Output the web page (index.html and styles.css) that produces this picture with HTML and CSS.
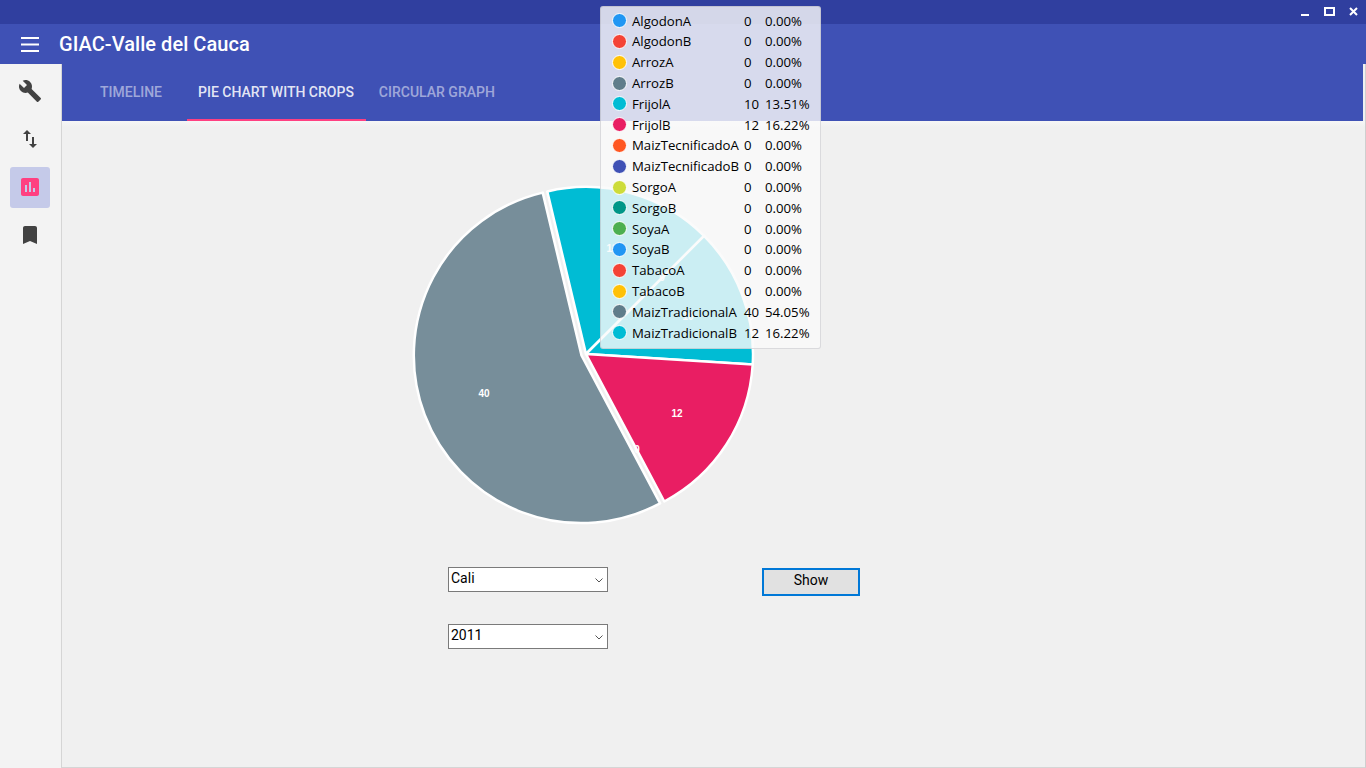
FILE: index.html
```html
<!DOCTYPE html>
<html lang="en">
<head>
  <meta charset="UTF-8" />
  <title>GIAC-Valle del Cauca</title>
  <link rel="stylesheet" href="styles.css">
</head>
<body>
  <!-- Window title bar -->
  <div class="titlebar">
    <svg class="win-btn" viewBox="0 0 24 24"><rect x="8" y="14" width="8" height="2" /></svg>
    <svg class="win-btn" viewBox="0 0 24 24"><rect class="win-line" x="8" y="8" width="9" height="7" /></svg>
    <svg class="win-btn" viewBox="0 0 24 24"><path class="win-line" d="M9 8L16 15M16 8L9 15" /></svg>
  </div>

  <!-- App bar -->
  <header class="appbar">
    <svg class="menu-icon" viewBox="0 0 18 15">
      <rect width="18" height="2" />
      <rect y="6.5" width="18" height="2" />
      <rect y="13" width="18" height="2" />
    </svg>
    <h1 class="app-title">GIAC-Valle del Cauca</h1>
  </header>

  <div class="workspace">
    <!-- Left tools -->
    <nav class="sidebar">
      <div class="tool">
        <svg viewBox="0 0 24 24"><path d="M22.7 19l-9.1-9.1c.9-2.3.4-5-1.5-6.9-2-2-5-2.4-7.4-1.3L9 6 6 9 1.6 4.7C.4 7.1.9 10.1 2.9 12.1c1.9 1.9 4.6 2.4 6.9 1.5l9.1 9.1c.4.4 1 .4 1.4 0l2.3-2.3c.5-.4.5-1.1.1-1.4z" /></svg>
      </div>
      <div class="tool">
        <svg viewBox="0 0 24 24"><path d="M9 3L5 6.99h3V14h2V6.99h3L9 3zm7 14.01V10h-2v7.01h-3L15 21l4-3.99h-3z" /></svg>
      </div>
      <div class="tool tool-active">
        <svg viewBox="0 0 24 24"><path d="M19 3H5c-1.1 0-2 .9-2 2v14c0 1.1.9 2 2 2h14c1.1 0 2-.9 2-2V5c0-1.1-.9-2-2-2zM9 17H7v-7h2v7zm4 0h-2V7h2v10zm4 0h-2v-4h2v4z" /></svg>
      </div>
      <div class="tool">
        <svg viewBox="0 0 24 24"><path d="M17 3H7c-1.1 0-1.99.9-1.99 2L5 21l7-3 7 3V5c0-1.1-.9-2-2-2z" /></svg>
      </div>
    </nav>

    <main class="main">
      <div class="tabs">
        <div class="tab">TIMELINE</div>
        <div class="tab tab-active">PIE CHART WITH CROPS</div>
        <div class="tab">CIRCULAR GRAPH</div>
      </div>

      <div class="content">
        <svg class="pie" viewBox="411 184 344 344">
          <g class="slices">
            <path fill="#00bcd4" d="M586 354L547.300 191.500A167 167 0 0 1 704.100 235.900Z" />
            <path fill="#00bcd4" d="M586 354L704.100 235.900A167 167 0 0 1 752.700 364.500Z" />
            <path fill="#e91e63" d="M586 354L752.700 364.500A167 167 0 0 1 664.300 501.500Z" />
            <path fill="#778e9a" d="M581.500 355.500L660.100 503.400A167.500 167.500 0 1 1 542.700 192.600Z" />
          </g>
          <g class="pie-labels">
            <text x="484" y="396.500">40</text>
            <text x="677" y="416.500">12</text>
            <text x="612" y="252">12</text>
            <text x="688" y="320">10</text>
            <text x="662" y="281">0</text>
            <text x="637" y="453">0</text>
          </g>
        </svg>

        <div class="filters">
          <div class="combos">
            <div class="combo">Cali<svg viewBox="0 0 8 5"><path d="M.5 .5L4 4L7.500 .5" /></svg></div>
            <div class="combo">2011<svg viewBox="0 0 8 5"><path d="M.5 .5L4 4L7.500 .5" /></svg></div>
          </div>
          <button class="show-btn">Show</button>
        </div>
      </div>
    </main>
  </div>

  <!-- Chart tooltip, lies over everything -->
  <div class="legend">
    <div class="legend-row"><span class="dot" style="background:#2196f3"></span><span>AlgodonA</span><span>0</span><span>0.00%</span></div>
    <div class="legend-row"><span class="dot" style="background:#f44336"></span><span>AlgodonB</span><span>0</span><span>0.00%</span></div>
    <div class="legend-row"><span class="dot" style="background:#ffc107"></span><span>ArrozA</span><span>0</span><span>0.00%</span></div>
    <div class="legend-row"><span class="dot" style="background:#607d8b"></span><span>ArrozB</span><span>0</span><span>0.00%</span></div>
    <div class="legend-row"><span class="dot" style="background:#00bcd4"></span><span>FrijolA</span><span>10</span><span>13.51%</span></div>
    <div class="legend-row"><span class="dot" style="background:#e91e63"></span><span>FrijolB</span><span>12</span><span>16.22%</span></div>
    <div class="legend-row"><span class="dot" style="background:#ff5722"></span><span>MaizTecnificadoA</span><span>0</span><span>0.00%</span></div>
    <div class="legend-row"><span class="dot" style="background:#3f51b5"></span><span>MaizTecnificadoB</span><span>0</span><span>0.00%</span></div>
    <div class="legend-row"><span class="dot" style="background:#cddc39"></span><span>SorgoA</span><span>0</span><span>0.00%</span></div>
    <div class="legend-row"><span class="dot" style="background:#009688"></span><span>SorgoB</span><span>0</span><span>0.00%</span></div>
    <div class="legend-row"><span class="dot" style="background:#4caf50"></span><span>SoyaA</span><span>0</span><span>0.00%</span></div>
    <div class="legend-row"><span class="dot" style="background:#2196f3"></span><span>SoyaB</span><span>0</span><span>0.00%</span></div>
    <div class="legend-row"><span class="dot" style="background:#f44336"></span><span>TabacoA</span><span>0</span><span>0.00%</span></div>
    <div class="legend-row"><span class="dot" style="background:#ffc107"></span><span>TabacoB</span><span>0</span><span>0.00%</span></div>
    <div class="legend-row"><span class="dot" style="background:#607d8b"></span><span>MaizTradicionalA</span><span>40</span><span>54.05%</span></div>
    <div class="legend-row"><span class="dot" style="background:#00bcd4"></span><span>MaizTradicionalB</span><span>12</span><span>16.22%</span></div>
  </div>
</body>
</html>
```

FILE: styles.css
```css
* {
  box-sizing: border-box;
}

body {
  margin: 0;
  width: 1366px;
  height: 768px;
  overflow: hidden;
  background: #f0f0f0;
  color: #000;
  font-family: Roboto, sans-serif;
  display: flex;
  flex-direction: column;
}

/* Title bar */
.titlebar {
  height: 24px;
  flex: none;
  background: #303f9f;
  display: flex;
  justify-content: flex-end;
  padding-right: 1px;
}

.win-btn {
  width: 24px;
  height: 24px;
  fill: #fff;
}

.win-line {
  fill: none;
  stroke: #fff;
  stroke-width: 2;
}

/* App bar */
.appbar {
  height: 40px;
  flex: none;
  background: #3f51b5;
  color: #fff;
  display: flex;
  align-items: center;
  gap: 20px;
  padding-left: 21px;
}

.menu-icon {
  width: 18px;
  height: 15px;
  fill: #fff;
}

.app-title {
  margin: 0;
  font-size: 20px;
  font-weight: 500;
  letter-spacing: 0.05px;
}

.workspace {
  flex: 1;
  display: flex;
  min-height: 0;
}

/* Sidebar */
.sidebar {
  width: 62px;
  flex: none;
  background: #f3f3f3;
  border-right: 1px solid #d5d5d5;
  padding: 7px 11px 0 10px;
  display: flex;
  flex-direction: column;
  gap: 7px;
}

.tool {
  height: 41px;
  border-radius: 3px;
  padding-top: 8px;
  display: flex;
  justify-content: center;
  align-items: flex-start;
}

.tool svg {
  width: 24px;
  height: 24px;
  fill: #424242;
}

.tool-active {
  background: #c5cae9;
}

.tool-active svg {
  fill: #ff4081;
}

/* Main area */
.main {
  flex: 1;
  min-width: 0;
  border-right: 1px solid #cfcfcf;
  border-bottom: 1px solid #d5d5d5;
  display: flex;
  flex-direction: column;
}

.tabs {
  height: 57px;
  flex: none;
  margin-right: 2px;
  padding-left: 27px;
  background: #3f51b5;
  display: flex;
}

.tab {
  padding: 0 11px;
  line-height: 57px;
  font-size: 14px;
  font-weight: 500;
  color: rgba(255, 255, 255, 0.5);
}

.tab-active {
  margin: 0 2px 0 14px;
  padding-right: 12px;
  color: rgba(255, 255, 255, 0.87);
  border-bottom: 2px solid #ff4081;
}

.content {
  flex: 1;
  background: linear-gradient(#f6f6f6, #f0f0f0 6px);
}

.pie {
  display: block;
  width: 344px;
  height: 344px;
  margin: 63px 0 0 349px;
}

.slices path {
  stroke: #fff;
  stroke-width: 2.5;
  stroke-linejoin: round;
}

.pie-labels text {
  fill: #fff;
  font-family: "Liberation Sans", sans-serif;
  font-size: 10px;
  font-weight: bold;
  text-anchor: middle;
}

/* Filters */
.filters {
  display: flex;
  align-items: flex-start;
  gap: 154px;
  margin: 39px 0 0 386px;
}

.combos {
  display: flex;
  flex-direction: column;
  gap: 32px;
}

.combo {
  width: 160px;
  height: 25px;
  padding: 0 4px 3px 2px;
  background: #fff;
  border: 1px solid #7a7a7a;
  font-size: 14px;
  display: flex;
  align-items: center;
  justify-content: space-between;
}

.combo svg {
  width: 8px;
  height: 5px;
  margin-top: 4px;
  fill: none;
  stroke: #555;
  stroke-width: 1;
}

.show-btn {
  width: 98px;
  height: 28px;
  margin-top: 1px;
  padding: 0 0 5px;
  background: #e1e1e1;
  border: 2px solid #0078d7;
  border-radius: 0;
  color: #000;
  font-family: Roboto, sans-serif;
  font-size: 14px;
}

/* Tooltip */
.legend {
  position: absolute;
  left: 600px;
  top: 6px;
  width: 221px;
  height: 343px;
  padding: 3.3px 0 0 11px;
  background: rgba(250, 250, 250, 0.81);
  border: 1px solid rgba(160, 160, 170, 0.35);
  border-radius: 3px;
  font-family: "Open Sans", sans-serif;
  font-size: 13.2px;
}

.legend-row {
  height: 20.8px;
  display: grid;
  grid-template-columns: 20px 112px 21px auto;
  align-items: center;
}

.dot {
  width: 15px;
  height: 15px;
  border: 1.5px solid #fff;
  border-radius: 50%;
}
```
